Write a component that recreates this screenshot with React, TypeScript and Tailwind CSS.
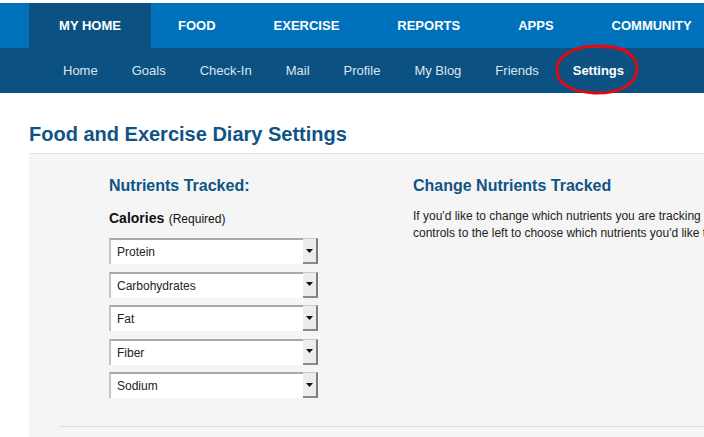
import React from "react";

const topItems = ["FOOD", "EXERCISE", "REPORTS", "APPS", "COMMUNITY"];
const subItems = ["Home", "Goals", "Check-In", "Mail", "Profile", "My Blog", "Friends", "Settings"];
const nutrients = ["Protein", "Carbohydrates", "Fat", "Fiber", "Sodium"];

function FakeSelect({ label }: { label: string }) {
  return (
    <div className="flex h-[26px] w-[209px]">
      <div className="flex-1 bg-white border-t-2 border-l-2 border-t-[#a9a9a9] border-l-[#c4c4c4] flex items-center pl-[6px] text-[12px] text-[#222]">
        {label}
      </div>
      <div className="w-[15px] bg-[#ededed] border-t border-t-[#c8c8c8] border-r-2 border-b-2 border-r-[#7d7d7d] border-b-[#8a8a8a] flex items-center justify-center">
        <svg width="7" height="4" viewBox="0 0 7 4">
          <polygon points="0,0 7,0 3.5,4" fill="#111" />
        </svg>
      </div>
    </div>
  );
}

export default function App() {
  return (
    <div
      className="relative w-[704px] h-[437px] overflow-hidden bg-white pt-[3px]"
      style={{ fontFamily: '"Liberation Sans", Arial, sans-serif' }}
    >
      {/* Top nav */}
      <div className="h-[45px] bg-[#0071bb] flex pl-[29px]">
        <div className="h-full w-[122px] shrink-0 bg-[#0b5283] flex items-center justify-center text-[13px] font-bold text-white whitespace-nowrap">
          MY HOME
        </div>
        <div className="flex h-full -ml-[2px]">
          {topItems.map((t) => (
            <div
              key={t}
              className="h-full flex items-center px-[29px] text-[13px] font-bold text-white whitespace-nowrap"
            >
              {t}
            </div>
          ))}
        </div>
      </div>
      {/* Sub nav */}
      <div className="h-[45px] bg-[#0b5283] flex items-center pl-[63px] gap-[34px]">
        {subItems.map((t) => (
          <div
            key={t}
            className={`text-[13px] whitespace-nowrap ${
              t === "Settings" ? "font-bold text-white" : "text-[#dce5ee]"
            }`}
          >
            {t}
          </div>
        ))}
      </div>

      {/* Title */}
      <h1 className="ml-[29px] mt-[29px] text-[20px] leading-[24px] font-bold text-[#0f5485] whitespace-nowrap">
        Food and Exercise Diary Settings
      </h1>

      {/* Panel */}
      <div className="ml-[29px] mt-[7px] border-t border-t-[#e2e2e2] bg-[#f5f5f5] h-[300px]">
        <div className="flex pl-[80px] pt-[22px]">
          <div className="w-[304px] shrink-0">
            <div className="text-[16px] leading-[20px] font-bold text-[#0f5485]">Nutrients Tracked:</div>
            <div className="mt-[12px] leading-[20px] text-[#111]">
              <span className="text-[14px] font-bold">Calories</span>{" "}
              <span className="text-[12px]">(Required)</span>
            </div>
            <div className="mt-[9px] flex flex-col gap-[7.5px]">
              {nutrients.map((n) => (
                <FakeSelect key={n} label={n} />
              ))}
            </div>
          </div>
          <div className="shrink-0 whitespace-nowrap">
            <div className="text-[16px] leading-[20px] font-bold text-[#0f5485]">Change Nutrients Tracked</div>
            <p className="mt-[12px] text-[12px] leading-[17px] text-[#222]">
              If you'd like to change which nutrients you are tracking in your food diary, use the
              <br />
              controls to the left to choose which nutrients you'd like to track.
            </p>
          </div>
        </div>
        <div className="ml-[30px] mt-[28px] border-t border-t-[#dcdcdc]" />
      </div>

      {/* Red hand-drawn circle annotation */}
      <svg
        className="absolute left-[550px] top-[42px]"
        width="95"
        height="58"
        viewBox="0 0 95 58"
        fill="none"
      >
        <path
          d="M52 5 C73 4, 89 14, 87 29 C85 44, 66 52, 44 51 C21 50, 6 41, 7 27 C8 13, 25 4, 47 4 C60 4, 70 6, 77 9"
          stroke="#e8070b"
          strokeWidth="2.8"
          strokeLinecap="round"
        />
      </svg>
    </div>
  );
}
